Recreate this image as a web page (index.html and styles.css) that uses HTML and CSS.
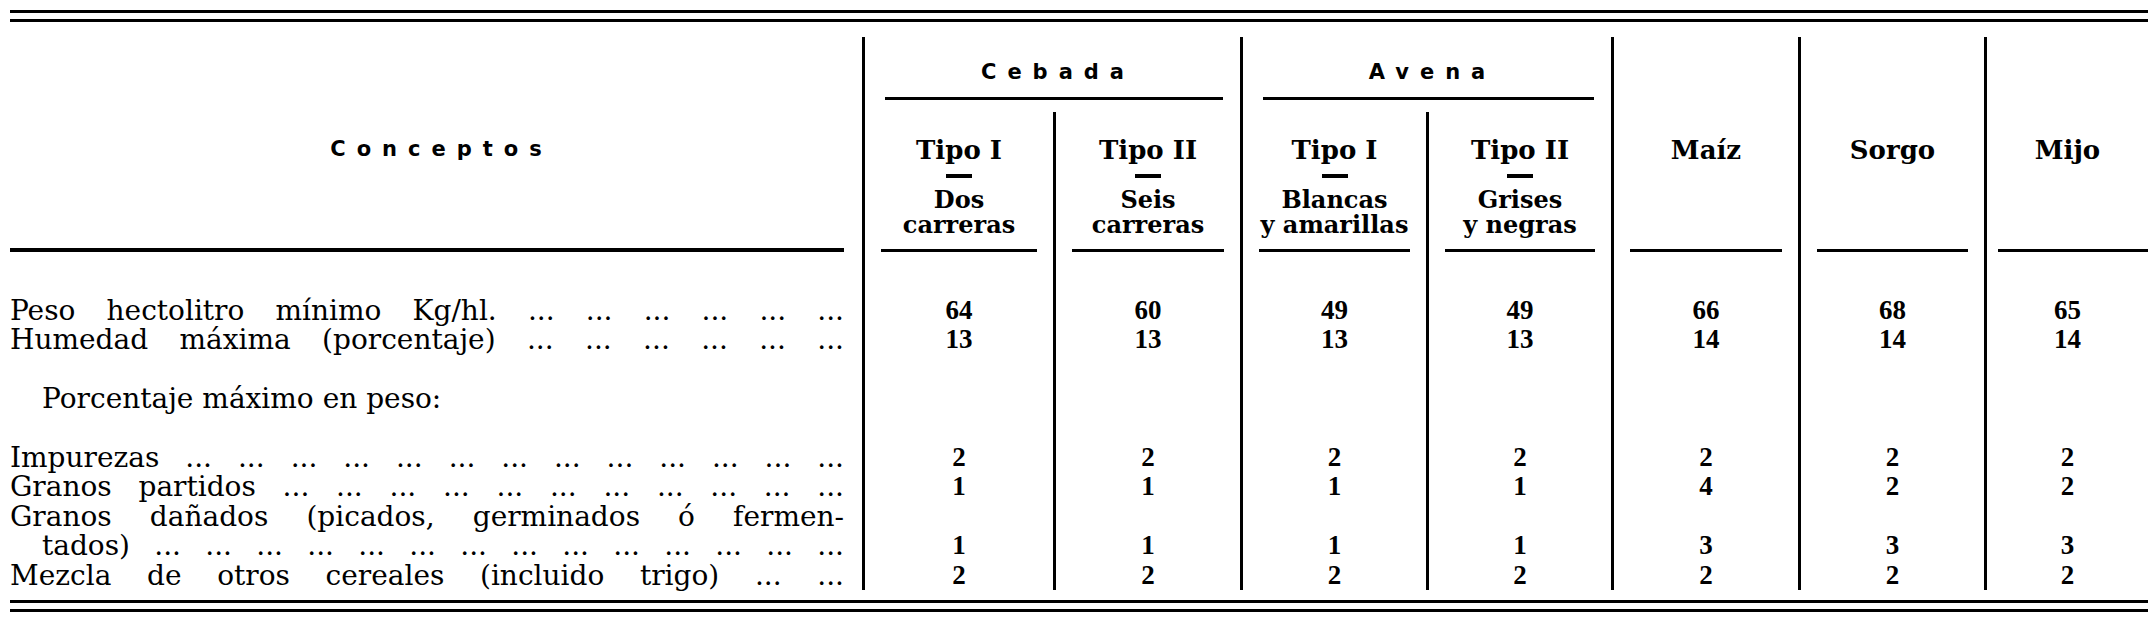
FILE: index.html
```html
<!DOCTYPE html>
<html lang="es">
<head>
<meta charset="utf-8">
<title>Cereales — condiciones mínimas</title>
<link rel="stylesheet" href="styles.css">
</head>
<body>
<div class="page">
  <div class="double-rule"></div>
  <div class="table">
    <div class="head-span col1">
      <div class="span-title"><span class="spaced">Conceptos</span></div>
      <div class="rule rule-concept"></div>
    </div>

    <div class="head-group col2-3 vl">
      <div class="group-title"><span class="spaced">Cebada</span></div>
      <div class="rule rule-group"></div>
    </div>
    <div class="head-group col4-5 vl">
      <div class="group-title"><span class="spaced">Avena</span></div>
      <div class="rule rule-group"></div>
    </div>

    <div class="head-span col6 vl">
      <div class="span-title">Maíz</div>
      <div class="rule rule-sub"></div>
    </div>
    <div class="head-span col7 vl">
      <div class="span-title">Sorgo</div>
      <div class="rule rule-sub"></div>
    </div>
    <div class="head-span col8 vl">
      <div class="span-title">Mijo</div>
      <div class="rule rule-last"></div>
    </div>

    <div class="head-sub col2 vl">
      <div class="sub-title">Tipo I</div>
      <div class="dash"></div>
      <div class="sub-desc">Dos<br>carreras</div>
      <div class="rule rule-sub"></div>
    </div>
    <div class="head-sub col3 vl">
      <div class="sub-title">Tipo II</div>
      <div class="dash"></div>
      <div class="sub-desc">Seis<br>carreras</div>
      <div class="rule rule-sub"></div>
    </div>
    <div class="head-sub col4 vl">
      <div class="sub-title">Tipo I</div>
      <div class="dash"></div>
      <div class="sub-desc">Blancas<br>y amarillas</div>
      <div class="rule rule-sub"></div>
    </div>
    <div class="head-sub col5 vl">
      <div class="sub-title">Tipo II</div>
      <div class="dash"></div>
      <div class="sub-desc">Grises<br>y negras</div>
      <div class="rule rule-sub"></div>
    </div>

    <div class="body-labels col1">
      <div class="ln just">Peso hectolitro mínimo Kg/hl. ... ... ... ... ... ...</div>
      <div class="ln just">Humedad máxima (porcentaje) ... ... ... ... ... ...</div>
      <div class="ln"></div>
      <div class="ln indent">Porcentaje máximo en peso:</div>
      <div class="ln"></div>
      <div class="ln just">Impurezas ... ... ... ... ... ... ... ... ... ... ... ... ...</div>
      <div class="ln just">Granos partidos ... ... ... ... ... ... ... ... ... ... ...</div>
      <div class="ln just">Granos dañados (picados, germinados ó fermen-</div>
      <div class="ln just indent">tados) ... ... ... ... ... ... ... ... ... ... ... ... ... ...</div>
      <div class="ln just">Mezcla de otros cereales (incluido trigo) ... ...</div>
    </div>

    <div class="body-vals col2 vl">
      <div class="v">64</div><div class="v">13</div><div class="v"></div><div class="v"></div><div class="v"></div>
      <div class="v">2</div><div class="v">1</div><div class="v"></div><div class="v">1</div><div class="v">2</div>
    </div>
    <div class="body-vals col3 vl">
      <div class="v">60</div><div class="v">13</div><div class="v"></div><div class="v"></div><div class="v"></div>
      <div class="v">2</div><div class="v">1</div><div class="v"></div><div class="v">1</div><div class="v">2</div>
    </div>
    <div class="body-vals col4 vl">
      <div class="v">49</div><div class="v">13</div><div class="v"></div><div class="v"></div><div class="v"></div>
      <div class="v">2</div><div class="v">1</div><div class="v"></div><div class="v">1</div><div class="v">2</div>
    </div>
    <div class="body-vals col5 vl">
      <div class="v">49</div><div class="v">13</div><div class="v"></div><div class="v"></div><div class="v"></div>
      <div class="v">2</div><div class="v">1</div><div class="v"></div><div class="v">1</div><div class="v">2</div>
    </div>
    <div class="body-vals col6 vl">
      <div class="v">66</div><div class="v">14</div><div class="v"></div><div class="v"></div><div class="v"></div>
      <div class="v">2</div><div class="v">4</div><div class="v"></div><div class="v">3</div><div class="v">2</div>
    </div>
    <div class="body-vals col7 vl">
      <div class="v">68</div><div class="v">14</div><div class="v"></div><div class="v"></div><div class="v"></div>
      <div class="v">2</div><div class="v">2</div><div class="v"></div><div class="v">3</div><div class="v">2</div>
    </div>
    <div class="body-vals col8 vl">
      <div class="v">65</div><div class="v">14</div><div class="v"></div><div class="v"></div><div class="v"></div>
      <div class="v">2</div><div class="v">2</div><div class="v"></div><div class="v">3</div><div class="v">2</div>
    </div>
  </div>
  <div class="double-rule bottom"></div>
</div>
</body>
</html>
```

FILE: styles.css
```css
* { box-sizing: border-box; }

html, body {
  margin: 0;
  padding: 0;
  background: #fff;
  color: #000;
}

body {
  font-family: "DejaVu Serif", "Liberation Serif", serif;
}

.page {
  width: 2154px;
  height: 625px;
  padding: 10px 6px 0 10px;
  overflow: hidden;
}

.double-rule {
  height: 12px;
  border-top: 3px solid #000;
  border-bottom: 3px solid #000;
}

.double-rule.bottom {
  margin-top: 10px;
}

.table {
  margin-top: 15px;
  display: grid;
  grid-template-columns: 852px 191px 187px 186px 185px 187px 186px 164px;
  grid-template-rows: 75px 140px auto;
}

.vl { border-left: 3px solid #000; }

/* placement */
.col1 { grid-column: 1; }
.col2 { grid-column: 2; }
.col3 { grid-column: 3; }
.col4 { grid-column: 4; }
.col5 { grid-column: 5; }
.col6 { grid-column: 6; }
.col7 { grid-column: 7; }
.col8 { grid-column: 8; }
.col2-3 { grid-column: 2 / span 2; }
.col4-5 { grid-column: 4 / span 2; }

.head-span {
  grid-row: 1 / span 2;
  display: flex;
  flex-direction: column;
  text-align: center;
}

.head-group {
  grid-row: 1;
  padding-top: 22px;
  text-align: center;
}

.head-sub {
  grid-row: 2;
  padding-top: 25px;
  text-align: center;
}

.body-labels,
.body-vals {
  grid-row: 3;
  padding-top: 44px;
}

.body-labels { padding-right: 18px; }

/* header text */
.spaced {
  font-family: "DejaVu Sans", "Liberation Sans", sans-serif;
  font-weight: bold;
  font-size: 21px;
  letter-spacing: 11px;
  padding-left: 11px;
}

.group-title {
  line-height: 26px;
  height: 26px;
}

.span-title {
  margin-top: 100px;
  line-height: 26px;
  font-size: 26px;
  font-weight: bold;
}

.col1 .span-title { margin-top: 97px; }

.sub-title {
  line-height: 26px;
  font-size: 26px;
  font-weight: bold;
}

.dash {
  width: 26px;
  height: 4px;
  margin: 11px auto 0;
  background: #000;
}

.sub-desc {
  margin-top: 9px;
  line-height: 25px;
  font-size: 24px;
  font-weight: bold;
}

/* rules */
.rule {
  height: 3px;
  background: #000;
}

.rule-group { margin: 12px 17px 0 20px; }
.rule-sub { margin: 12px 16px 0 16px; }
.head-span .rule { margin-top: auto; }
.rule-concept { margin-right: 18px; height: 4px; }
.rule-last { margin-left: 11px; margin-right: 0; }

/* body */
.ln {
  height: 29.4px;
  line-height: 29.4px;
  font-size: 28px;
  white-space: nowrap;
}

.ln.just {
  white-space: normal;
  text-align: justify;
  text-align-last: justify;
}

.ln.indent { padding-left: 32px; }

.v {
  height: 29.4px;
  line-height: 29.4px;
  text-align: center;
  font-family: "Liberation Serif", "DejaVu Serif", serif;
  font-weight: bold;
  font-size: 27px;
}
```
